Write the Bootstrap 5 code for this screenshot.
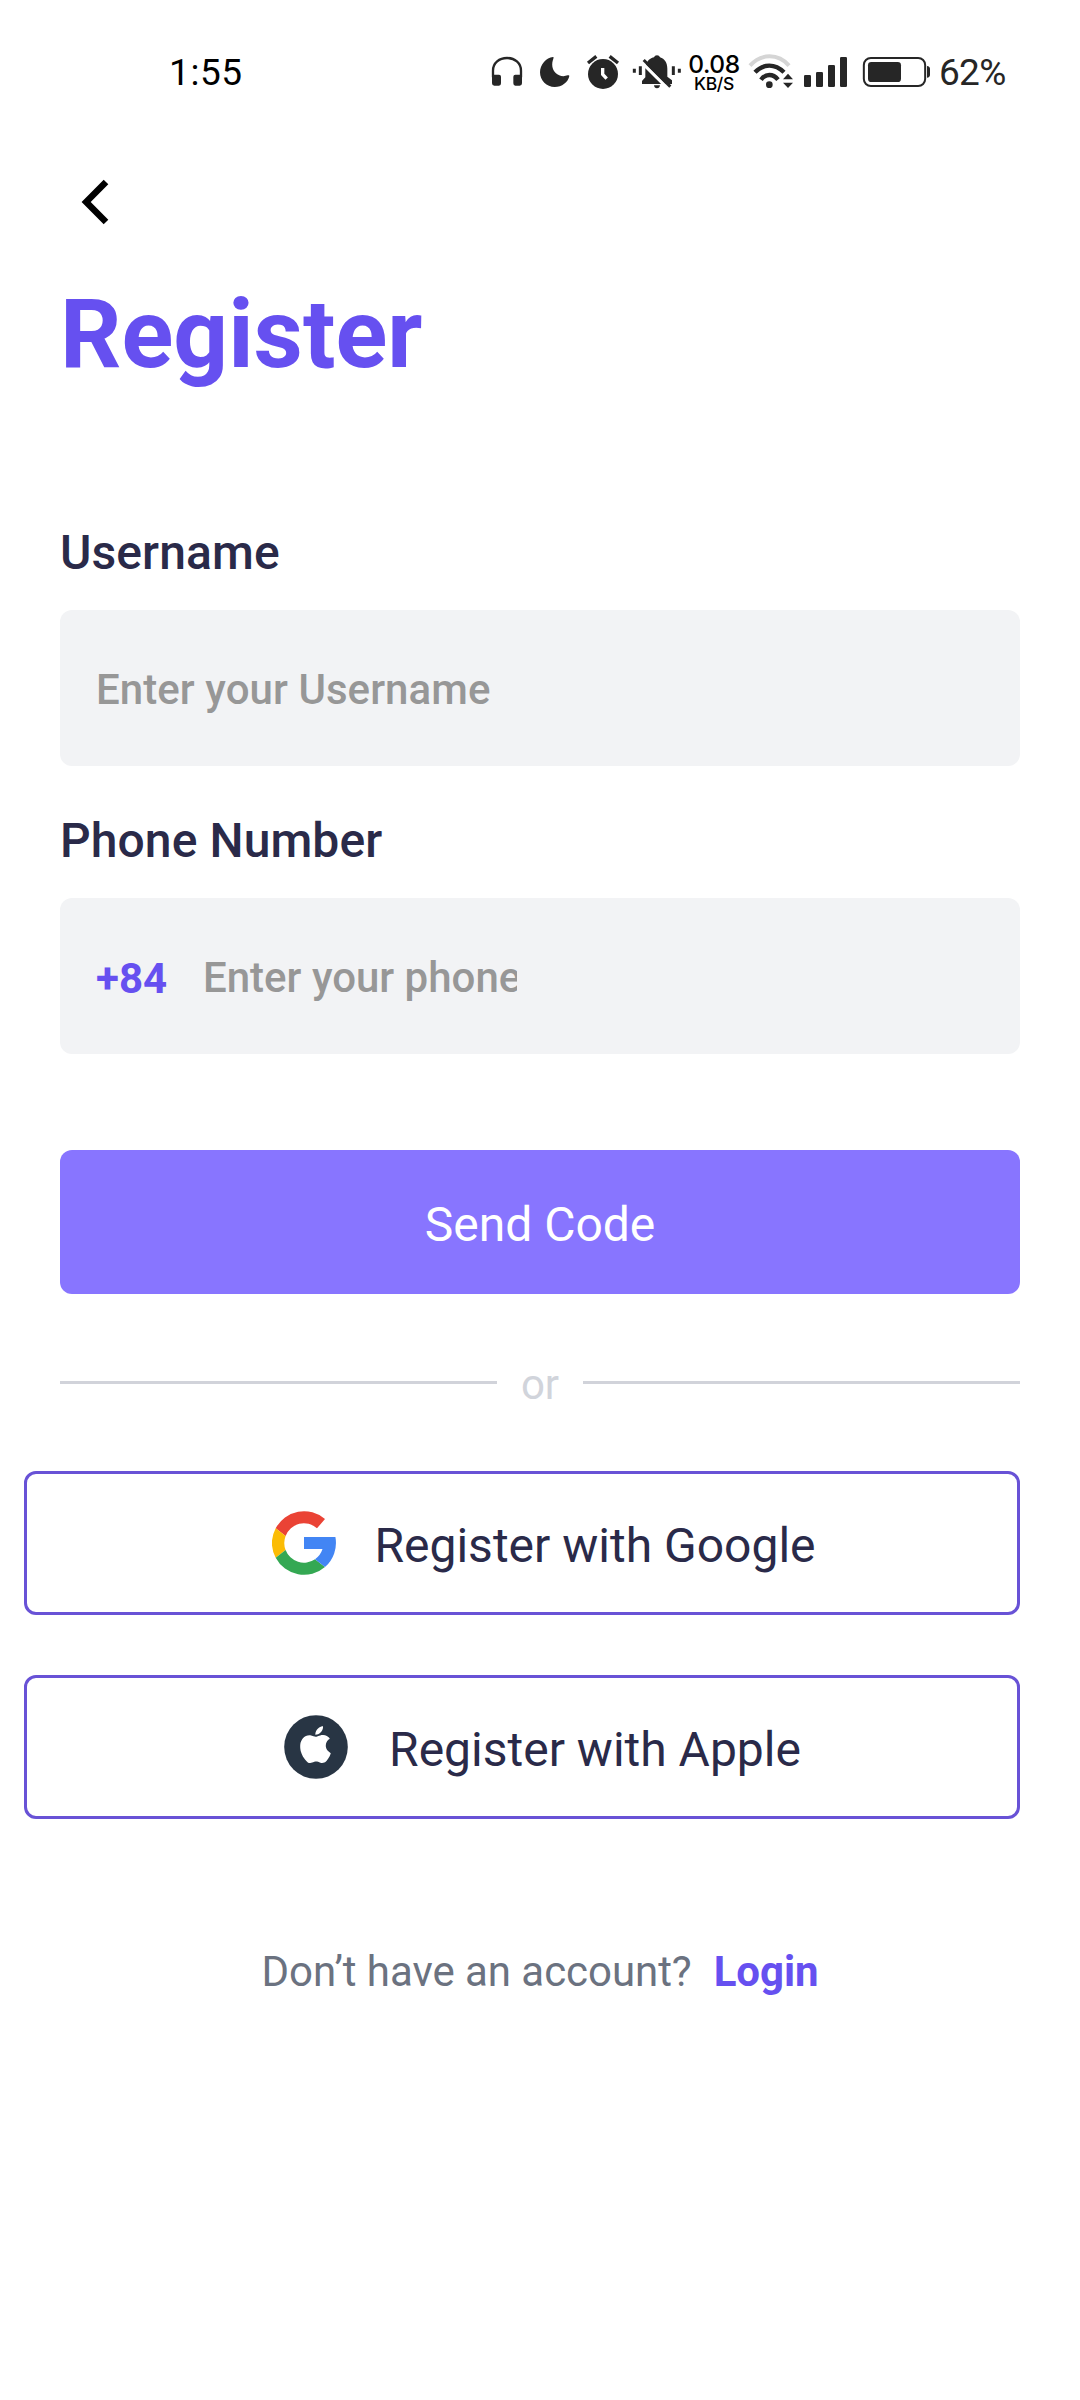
<!DOCTYPE html>
<html lang="en">
<head>
<meta charset="utf-8">
<meta name="viewport" content="width=device-width, initial-scale=1">
<title>Register</title>
<link href="https://cdn.jsdelivr.net/npm/bootstrap@5.3.0/dist/css/bootstrap.min.css" rel="stylesheet">
<style>
  body { font-family: Roboto, "Noto Sans", sans-serif; background: #fff; color: #2a2a49; }
  .phone { width: 1080px; height: 2400px; overflow: hidden; }
  svg { display: block; flex: none; }

  .status-bar { padding: 40px 0 0 169px; height: 104px; color: #262626; }
  .status-bar > svg { height: 64px; }
  .ico-gap { margin-left: 14px; }
  .ico-gap-sm { margin-left: 9px; }
  .clock { width: 321px; color: #000; font-size: 37px; line-height: 64px; padding-top: 1px; letter-spacing: .6px; }
  .net-speed { width: 52px; margin-left: 6px; padding-top: 11px; color: #000; font-family: Inter, sans-serif; font-weight: 500; text-align: center; }
  .net-speed .rate { font-size: 24.5px; line-height: 26px; letter-spacing: -.4px; }
  .net-speed .unit { font-size: 17.5px; line-height: 14px; letter-spacing: -.3px; }
  .charge { font-size: 37px; line-height: 64px; padding-top: 1px; margin-left: 8px; letter-spacing: -.7px; }

  .screen { padding: 0 60px; }
  .back-btn { margin: 70px 0 0 20px; }
  .page-title { margin: 48px 0 135px; font-size: 96px; line-height: 112px; font-weight: 700; color: #6650f0; }
  .field-label { font-size: 48px; line-height: 56px; font-weight: 500; margin: 0 0 29px; letter-spacing: .1px; }
  .field-label-next { margin-top: 47px; }
  .field-box, .field-box:focus { height: 156px; border: 0; border-radius: 12px; background: #f2f3f5; padding: 3px 36px 0; font-size: 42px; font-weight: 500; letter-spacing: .07px; }
  .field-box::placeholder, .phone-input::placeholder { color: #979797; opacity: 1; }
  .dial-code { font-weight: 700; color: #6650f0; width: 107px; padding-top: 2px; }
  .phone-input { width: 314px; border: 0; background: transparent; padding: 0; font-size: 42px; font-weight: 500; outline: 0; }
  .send-btn { height: 144px; margin-top: 96px; border: 0; border-radius: 12px; background: #8875ff; color: #fff; font-size: 48px; line-height: 56px; padding: 5px 0 0; }
  .divider { margin-top: 66px; height: 50px; font-size: 42px; line-height: 50px; color: #d1d4db; }
  .divider .rule { height: 3px; background: #d1d3da; margin-bottom: 5px; }
  .divider .word { width: 86px; }
  .social-btn { height: 144px; width: 996px; margin-left: -36px; border: 3px solid #6852d6; border-radius: 12px; background: #fff; color: #2a2a49; font-size: 48px; line-height: 56px; padding: 0 0 0 44px; gap: 38px; }
  .social-btn span { padding-top: 6px; }
  .google { margin-top: 61px; }
  .apple { margin-top: 60px; padding-left: 41px; gap: 41px; }
  .login-line { margin-top: 128px; font-size: 42px; line-height: 50px; color: #6b7280; gap: 22px; letter-spacing: -.05px; }
  .login-line a { color: #6650f0; font-weight: 700; }
</style>
</head>
<body>
<div class="phone">
  <header class="status-bar d-flex align-items-start text-nowrap">
    <div class="clock">1:55</div>
    <svg width="34" viewBox="60 0 102 192"><path d="M69 112V92C69 69 88 54 111 54S153 69 153 92V112" fill="none" stroke="currentColor" stroke-width="7"/><path d="M66 104H87q6 0 6 6V130q0 7-6 7H73q-7 0-7-7ZM156 104H136q-6 0-6 6V130q0 7 6 7H149q7 0 7-7Z" fill="currentColor"/></svg>
    <svg class="ico-gap" width="34" viewBox="204 0 102 192"><path d="M249 51C229 53 210 73 210 97C210 122 230 141 254 141C276 141 294 127 298 108C298 105 296 105 293 106C280 111 266 108 257 99C246 88 244 71 250 56C251 53 251 51 249 51Z" fill="currentColor"/></svg>
    <svg class="ico-gap" width="34" viewBox="348 0 102 192"><circle cx="399" cy="102" r="45" fill="currentColor"/><path d="M354 69L379 49M444 69L419 49" stroke="currentColor" stroke-width="10"/><path d="M398 84V103L410 116" stroke="#fff" stroke-width="10" fill="none"/></svg>
    <svg class="ms-2 ps-1" width="54" viewBox="486 0 150 192"><path d="M516 132V123L526 112V88C526 69 536 55 552 52Q554 46 561 46T570 52C584 56 592 69 592 86V110L606 121V132ZM552 136H570Q569 145 561 145T552 136Z" fill="currentColor"/><path d="M512 64L594 146" stroke="#fff" stroke-width="10"/><path d="M521 60L601 140" stroke="currentColor" stroke-width="9"/><path d="M493 86V98M511 79V105M610 79V105M628 86V98" stroke="currentColor" stroke-width="9"/></svg>
    <div class="net-speed"><div class="rate">0.08</div><div class="unit">KB/S</div></div>
    <svg class="ms-2" width="46" viewBox="24 0 138 192"><g fill="none"><path d="M30 77Q55 49 89 49T147 77" stroke="#d5d5d5" stroke-width="12"/><path d="M45 97Q64 77 88 77T132 97" stroke="currentColor" stroke-width="13"/><path d="M63 119Q73 105 88 105T114 119" stroke="currentColor" stroke-width="13"/></g><circle cx="88" cy="134" r="10" fill="currentColor"/><path d="M129 118L144 101L159 118ZM129 128H159L144 144Z" fill="currentColor"/></svg>
    <svg class="ico-gap-sm" width="45" viewBox="189 0 135 192"><g fill="currentColor"><rect x="192" y="105" width="21" height="36" rx="4"/><rect x="228" y="96" width="21" height="45" rx="4"/><rect x="264" y="75" width="21" height="66" rx="4"/><rect x="300" y="51" width="21" height="90" rx="4"/></g></svg>
    <svg class="ico-gap" width="69" viewBox="366 0 207 192"><rect x="371.500" y="54" width="184" height="84" rx="21" fill="none" stroke="currentColor" stroke-width="6"/><rect x="384" y="66" width="99" height="60" rx="10" fill="currentColor"/><path d="M561 78Q570 79 570 87V104Q570 112 561 113Z" fill="currentColor"/></svg>
    <div class="charge">62%</div>
  </header>

  <main class="screen d-flex flex-column">
    <a class="back-btn text-black align-self-start" href="#" aria-label="Back"><svg width="30" height="56" viewBox="120 402 90 168"><path d="M198 426L138.500 486L198 546" fill="none" stroke="currentColor" stroke-width="19.500"/></svg></a>
    <h1 class="page-title">Register</h1>

    <label class="field-label" for="username">Username</label>
    <input class="form-control field-box" id="username" type="text" placeholder="Enter your Username">

    <label class="field-label field-label-next" for="phone">Phone Number</label>
    <div class="field-box d-flex align-items-center">
      <span class="dial-code">+84</span>
      <input class="phone-input" id="phone" type="tel" placeholder="Enter your phone number">
    </div>

    <button class="btn send-btn w-100" type="button">Send Code</button>

    <div class="divider d-flex align-items-center">
      <div class="rule flex-fill"></div><div class="word text-center">or</div><div class="rule flex-fill"></div>
    </div>

    <button class="btn social-btn google d-flex align-items-center justify-content-center" type="button">
      <svg width="64" height="64" viewBox="0 0 64 64"><path fill="#ea4335" d="M53 8A32 32 0 0 0 3.700 17.300L13.600 25A19.500 19.500 0 0 1 45 17.300Z"/><path fill="#fbbc05" d="M3.700 17.300A32 32 0 0 0 3.700 46.700L13.600 39A19.500 19.500 0 0 1 13.600 25Z"/><path fill="#34a853" d="M3.700 46.700A32 32 0 0 0 53 56L43 48.200A19.500 19.500 0 0 1 13.600 39Z"/><path fill="#4285f4" d="M32 26H63.400A32 32 0 0 1 53 56L43 48.200A19.500 19.500 0 0 0 50.500 38H32Z"/></svg>
      <span>Register with Google</span>
    </button>

    <button class="btn social-btn apple d-flex align-items-center justify-content-center" type="button">
      <svg width="64" height="64" viewBox="0 0 64 64"><circle cx="32" cy="32" r="31.800" fill="#283544"/><path transform="translate(12.700 11.200) scale(2.350 2.300)" fill="#fff" d="M11.182.008C11.148-.03 9.923.023 8.857 1.180c-1.066 1.156-.902 2.482-.878 2.516s1.520.087 2.475-1.258.762-2.391.728-2.430m3.314 11.733c-.048-.096-2.325-1.234-2.113-3.422s1.675-2.789 1.698-2.854-.597-.790-1.254-1.157a3.700 3.700 0 0 0-1.563-.434c-.108-.003-.483-.095-1.254.116-.508.139-1.653.589-1.968.607-.316.018-1.256-.522-2.267-.665-.647-.125-1.333.131-1.824.328-.490.196-1.422.754-2.074 2.237-.652 1.482-.311 3.830-.067 4.560s.625 1.924 1.273 2.796c.576.984 1.340 1.667 1.659 1.899s1.219.386 1.843.067c.502-.308 1.408-.485 1.766-.472.357.013 1.061.154 1.782.539.571.197 1.111.115 1.652-.105.541-.221 1.324-1.059 2.238-2.758q.520-1.185.473-1.282"/></svg>
      <span>Register with Apple</span>
    </button>

    <div class="login-line d-flex justify-content-center">
      <span>Don’t have an account?</span><a class="text-decoration-none" href="#">Login</a>
    </div>
  </main>
</div>
<script src="https://cdn.jsdelivr.net/npm/bootstrap@5.3.0/dist/js/bootstrap.bundle.min.js"></script>
</body>
</html>
